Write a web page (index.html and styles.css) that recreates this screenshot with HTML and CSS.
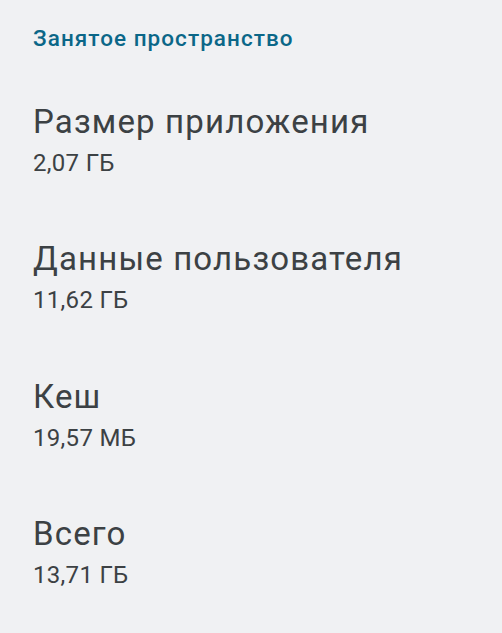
FILE: index.html
```html
<!DOCTYPE html>
<html lang="ru">
<head>
    <meta charset="UTF-8">
    <meta name="viewport" content="width=device-width, initial-scale=1.0">
    <title>Занятое пространство</title>
    <link rel="stylesheet" href="styles.css">
</head>
<body>
    <div class="storage">
        <h2 class="storage-header">Занятое пространство</h2>

        <div class="storage-list">
            <div class="storage-item">
                <div class="storage-title">Размер приложения</div>
                <div class="storage-value">2,07 ГБ</div>
            </div>

            <div class="storage-item">
                <div class="storage-title">Данные пользователя</div>
                <div class="storage-value">11,62 ГБ</div>
            </div>

            <div class="storage-item">
                <div class="storage-title">Кеш</div>
                <div class="storage-value">19,57 МБ</div>
            </div>

            <div class="storage-item">
                <div class="storage-title">Всего</div>
                <div class="storage-value">13,71 ГБ</div>
            </div>
        </div>
    </div>
</body>
</html>
```

FILE: styles.css
```css
* {
    margin: 0;
    padding: 0;
    box-sizing: border-box;
}

body {
    font-family: Roboto, 'Noto Sans', sans-serif;
    background: #f0f1f3;
    min-height: 100vh;
}

.storage {
    padding: 23.5px 33px 0;
}

/* Section header */
.storage-header {
    font-size: 22.5px;
    font-weight: 500;
    line-height: 28px;
    letter-spacing: 1.05px;
    color: #0b6788;
    margin-bottom: 50px;
}

/* Rows */
.storage-list {
    display: flex;
    flex-direction: column;
    gap: 61.5px;
}

.storage-title {
    font-size: 33px;
    line-height: 40px;
    letter-spacing: 1.15px;
    color: #3c4144;
}

.storage-value {
    font-size: 24px;
    line-height: 30px;
    letter-spacing: 0.3px;
    margin-top: 6px;
    color: #3c4144;
}
```
